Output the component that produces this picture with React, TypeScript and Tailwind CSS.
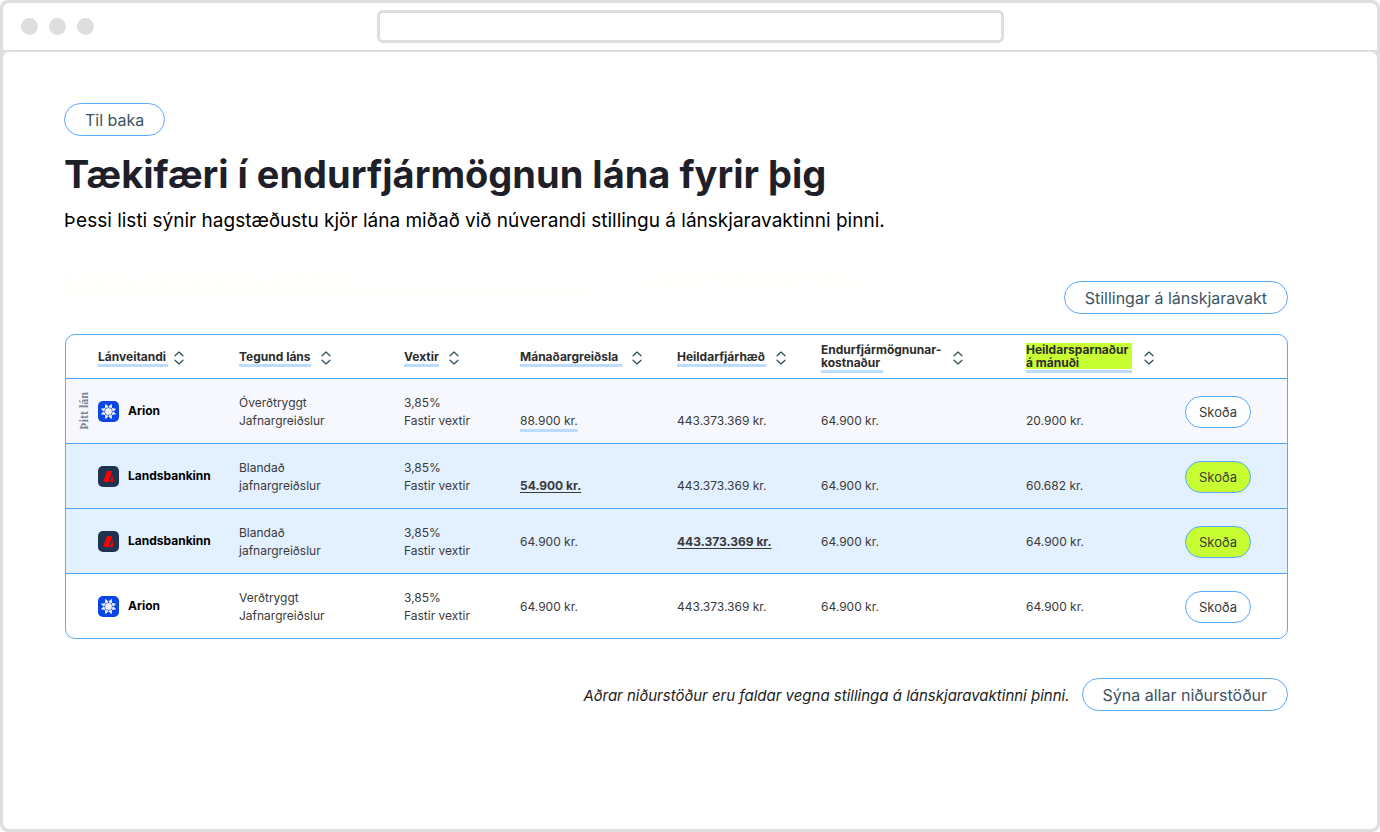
import clsx from "clsx";

type Bank = "Arion" | "Landsbankinn";

type Loan = {
  bank: Bank;
  kind: string[];
  monthly: string;
  total: string;
  cost: string;
  savings: string;
  best?: "monthly" | "total";
  current?: boolean;
  highlighted?: boolean;
  low?: boolean;
};

const loans: Loan[] = [
  {
    bank: "Arion",
    kind: ["Óverðtryggt", "Jafnargreiðslur"],
    monthly: "88.900 kr.",
    total: "443.373.369 kr.",
    cost: "64.900 kr.",
    savings: "20.900 kr.",
    current: true,
    low: true,
  },
  {
    bank: "Landsbankinn",
    kind: ["Blandað", "jafnargreiðslur"],
    monthly: "54.900 kr.",
    total: "443.373.369 kr.",
    cost: "64.900 kr.",
    savings: "60.682 kr.",
    best: "monthly",
    highlighted: true,
    low: true,
  },
  {
    bank: "Landsbankinn",
    kind: ["Blandað", "jafnargreiðslur"],
    monthly: "64.900 kr.",
    total: "443.373.369 kr.",
    cost: "64.900 kr.",
    savings: "64.900 kr.",
    best: "total",
    highlighted: true,
  },
  {
    bank: "Arion",
    kind: ["Verðtryggt", "Jafnargreiðslur"],
    monthly: "64.900 kr.",
    total: "443.373.369 kr.",
    cost: "64.900 kr.",
    savings: "64.900 kr.",
  },
];

const columns = [
  { lines: ["Lánveitandi"], label: "w-[70px]", gap: "gap-1.5" },
  { lines: ["Tegund láns"], label: "w-[72px]", gap: "gap-2.5" },
  { lines: ["Vextir"], label: "w-[35px]", gap: "gap-2.5" },
  { lines: ["Mánaðargreiðsla"], label: "w-[102px]", gap: "gap-2.5" },
  { lines: ["Heildarfjárhæð"], label: "w-[89px]", gap: "gap-2.5" },
  {
    lines: ["Endurfjármögnunar-", "kostnaður"],
    label: "w-[122px]",
    gap: "gap-2.5",
    bar: "w-[62px]",
  },
  {
    lines: ["Heildarsparnaður", "á mánuði"],
    label: "w-[106px]",
    gap: "gap-3",
    marked: true,
  },
];

const SortIcon = () => (
  <svg
    className="w-[10px] h-[14px] shrink-0"
    viewBox="0 0 10 14"
    fill="none"
    stroke="#3c5361"
    strokeWidth="1.3"
    strokeLinecap="round"
    strokeLinejoin="round"
    aria-hidden="true"
  >
    <path d="M1 4.8 5 1l4 3.800M1 9.200 5 13l4-3.800" />
  </svg>
);

const ArionLogo = () => (
  <svg className="w-[21px] h-[21px] shrink-0" viewBox="0 0 21 21" aria-hidden="true">
    <rect width="21" height="21" rx="5" fill="#0b45e6" />
    <path
      d="M13.700 2.800 14 7l4.200.700-2.700 2.800 2.700 2.800L14 14l-.300 4.200-3.200-2.700-3.200 2.700L7 14l-4.200-.700 2.700-2.800-2.700-2.800L7 7l.300-4.200 3.200 2.700z"
      fill="#f1f1f1"
    />
    <circle cx="10.500" cy="10.500" r="3.900" fill="none" stroke="#0b45e6" strokeWidth="0.600" />
    <path
      d="M10.500 5v2M10.500 14v2M5 10.500h2M14 10.500h2M6.500 6.500 8 8M13 13l1.500 1.500M14.500 6.500 13 8M8 13l-1.500 1.500"
      stroke="#0b45e6"
      strokeWidth="0.600"
    />
  </svg>
);

const LandsbankinnLogo = () => (
  <svg className="w-[21px] h-[21px] shrink-0" viewBox="0 0 21 21" aria-hidden="true">
    <rect width="21" height="21" rx="5" fill="#1f3350" />
    <path d="M9 5h5.200l-3.400 10.800H5.200z" fill="#ff0000" />
    <path d="M14 8.500 15.800 15.800h-4.200l1.500-2.200z" fill="#ff0000" />
  </svg>
);

const Pill = ({ children }: { children: string }) => (
  <button className="h-[33px] px-5 rounded-full border border-[#56aaff] bg-white text-base text-[#3c5361] whitespace-nowrap">
    {children}
  </button>
);

const LoanRow = ({ loan }: { loan: Loan }) => {
  const cell = "border-t border-[#4aa3f5] pt-0.5";
  const amount = clsx("border-t border-[#4aa3f5]", loan.low ? "pt-5" : "pt-0.5");
  const best = "font-bold underline underline-offset-2";

  return (
    <tr
      className={clsx(
        "h-[65px]",
        loan.current && "bg-[#f7f8fd]",
        loan.highlighted && "bg-[#e2f0ff]"
      )}
    >
      <td className="border-t border-[#4aa3f5] pl-3">
        {loan.current && (
          <span className="block [writing-mode:vertical-rl] rotate-180 font-['Liberation_Serif',serif] font-bold text-[12px] leading-[12px] text-[#7f8494]">
            Þitt lán
          </span>
        )}
      </td>
      <td className="border-t border-[#4aa3f5]">
        <div className="flex items-center gap-[9px] font-bold text-black">
          {loan.bank === "Arion" ? <ArionLogo /> : <LandsbankinnLogo />}
          {loan.bank}
        </div>
      </td>
      <td className={cell}>
        {loan.kind[0]}
        <br />
        {loan.kind[1]}
      </td>
      <td className={cell}>
        3,85%
        <br />
        Fastir vextir
      </td>
      <td className={amount}>
        <span
          className={clsx(
            loan.best === "monthly" && best,
            loan.current &&
              "underline decoration-[3px] decoration-[#bbdcff] underline-offset-4"
          )}
        >
          {loan.monthly}
        </span>
      </td>
      <td className={amount}>
        <span className={clsx(loan.best === "total" && best)}>{loan.total}</span>
      </td>
      <td className={amount}>{loan.cost}</td>
      <td className={amount}>{loan.savings}</td>
      <td className={cell}>
        <button
          className={clsx(
            "block w-[66px] h-8 rounded-full border border-[#56aaff] text-[13px]",
            loan.highlighted ? "bg-[#c8ff32]" : "bg-white"
          )}
        >
          Skoða
        </button>
      </td>
    </tr>
  );
};

const App = () => {
  return (
    <div className="min-h-screen flex flex-col gap-[2px] rounded-lg bg-[#dedede] p-[3px] font-[Inter,sans-serif]">
      <div className="grid grid-cols-[1fr_627px_1fr] items-center h-[47px] rounded-t-md bg-white">
        <div className="flex gap-[11px] pl-[18px]">
          <span className="size-[17px] rounded-full bg-[#dedede]" />
          <span className="size-[17px] rounded-full bg-[#dedede]" />
          <span className="size-[17px] rounded-full bg-[#dedede]" />
        </div>
        <input
          aria-label="Slóð"
          className="h-[33px] w-full rounded-md border-[3px] border-[#dedede] bg-white px-3 text-sm outline-none"
        />
      </div>

      <main className="grow rounded-md bg-white pt-[51px] pl-[61px] pr-[89px] pb-16">
        <Pill>Til baka</Pill>
        <h1 className="mt-[15px] text-[38px] leading-[46px] font-bold text-[#1f1f29]">
          Tækifæri í endurfjármögnun lána fyrir þig
        </h1>
        <p className="mt-[10px] text-[19px] leading-[28px] text-black">
          Þessi listi sýnir hagstæðustu kjör lána miðað við núverandi stillingu á
          lánskjaravaktinni þinni.
        </p>

        <div className="mt-[31px] flex items-start justify-between">
          <div className="grid grid-cols-[565px_auto] font-['Liberation_Serif',serif] text-2xl leading-6 font-bold text-[#fffffa]">
            <span className="border-b-4 border-[#fffffa] mr-10">
              Lægsta mánaðarleg greiðsla
            </span>
            <span>Lægsta heildargreiðsla</span>
          </div>
          <div className="pt-[15px]">
            <Pill>Stillingar á lánskjaravakt</Pill>
          </div>
        </div>

        <div className="mt-5 ml-px rounded-[10px] border border-[#56aaff] overflow-hidden">
          <table className="w-full table-fixed border-separate border-spacing-0 text-left text-[12px] leading-[18px] text-[#3a3a3a]">
            <colgroup>
              <col className="w-[32px]" />
              <col className="w-[141px]" />
              <col className="w-[165px]" />
              <col className="w-[116px]" />
              <col className="w-[157px]" />
              <col className="w-[144px]" />
              <col className="w-[205px]" />
              <col className="w-[159px]" />
              <col className="w-[102px]" />
            </colgroup>
            <thead>
              <tr className="h-[43px] text-[12px] leading-[13px] text-[#2c2c2c]">
                <td />
                {columns.map((column) => (
                  <th key={column.lines[0]} className="pt-[3px]">
                    <button
                      className={clsx(
                        "flex items-center text-left font-bold whitespace-nowrap",
                        column.gap
                      )}
                    >
                      <span className={column.label}>
                        <span
                          className={clsx("block", column.marked && "bg-[#c8ff32]")}
                        >
                          {column.lines.map((line) => (
                            <span key={line} className="block">
                              {line}
                            </span>
                          ))}
                        </span>
                        <span
                          className={clsx(
                            "mt-px block h-[3px] bg-[#bbdcff]",
                            column.bar
                          )}
                        />
                      </span>
                      <SortIcon />
                    </button>
                  </th>
                ))}
                <td />
              </tr>
            </thead>
            <tbody>
              {loans.map((loan, index) => (
                <LoanRow key={index} loan={loan} />
              ))}
            </tbody>
          </table>
        </div>

        <div className="mt-[39px] flex items-center justify-end gap-3">
          <p className="pt-1 text-[15px] italic text-[#1c1c1c]">
            Aðrar niðurstöður eru faldar vegna stillinga á lánskjaravaktinni þinni.
          </p>
          <Pill>Sýna allar niðurstöður</Pill>
        </div>
      </main>
    </div>
  );
};

export default App;
